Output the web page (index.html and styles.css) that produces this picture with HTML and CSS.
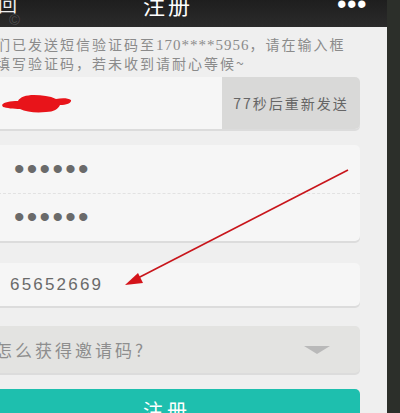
FILE: index.html
```html
<!DOCTYPE html>
<html lang="zh">
<head>
<meta charset="utf-8">
<link rel="stylesheet" href="styles.css">
</head>
<body>
<div class="screen">
  <header class="topbar">
    <span class="back">回</span>
    <span class="title">注册</span>
    <span class="more">•••</span>
    <span class="wm">©</span>
  </header>
  <div class="page">
    <p class="notice">我们已发送短信验证码至<span class="num">170****5956</span>，请在输入框<br>内填写验证码，若未收到请耐心等候~</p>
    <div class="box code">
      <div class="code-input">
        <svg class="scribble" width="74" height="24" viewBox="0 0 74 24"><path d="M2 14 C4 11 10 10 18 10 C20 6 26 4 34 4 C42 4 50 5 56 8 C62 7 68 7 71 9 C72 12 66 14 60 14 C58 18 54 21 46 21 C36 22 26 21 20 18 C14 18 6 17 3 16 Z" fill="#e8141a"/></svg>
      </div>
      <div class="resend">77秒后重新发送</div>
    </div>
    <div class="box pw">
      <div class="row"><span class="dots">••••••</span></div>
      <div class="row"><span class="dots">••••••</span></div>
    </div>
    <div class="box invite">65652669</div>
    <div class="box select">
      <span>怎么获得邀请码?</span>
      <span class="caret"></span>
    </div>
    <div class="submit">注册</div>
  </div>
  <svg class="arrow" width="400" height="413" viewBox="0 0 400 413">
    <line x1="348" y1="170" x2="136" y2="279" stroke="#c8151b" stroke-width="1.6"/>
    <polygon points="125,285 138,273 143,283" fill="#d4141a"/>
  </svg>
</div>
</body>
</html>
```
FILE: styles.css
```css
html, body {
  margin: 0;
  padding: 0;
}
body {
  width: 400px;
  height: 413px;
  overflow: hidden;
  background: #2c2f2a;
  font-family: "Noto Sans CJK SC", "Liberation Sans", sans-serif;
}
.screen {
  position: relative;
  width: 387px;
  height: 413px;
  background: #efefef;
  overflow: hidden;
}
.topbar {
  position: relative;
  height: 27px;
  background: linear-gradient(#1e1e1e, #2b2b2b);
  color: #fff;
}
.back {
  position: absolute;
  left: -2px;
  top: -6px;
  font-size: 19px;
  line-height: 20px;
  color: #eee;
}
.title {
  position: absolute;
  left: 143px;
  top: -8px;
  font-size: 22px;
  line-height: 24px;
  letter-spacing: 3px;
}
.more {
  position: absolute;
  left: 337px;
  top: -9px;
  font-family: "Liberation Sans", sans-serif;
  font-size: 27px;
  line-height: 26px;
  letter-spacing: 0.5px;
}
.wm {
  position: absolute;
  left: 9px;
  top: 11px;
  font-family: "Liberation Sans", sans-serif;
  font-size: 15px;
  color: rgba(255,255,255,0.18);
}
.page {
  margin-left: -12px;
  width: 372px;
  display: flex;
  flex-direction: column;
}
.notice {
  margin: 8px 0 0 -8px;
  font-size: 14px;
  line-height: 18px;
  letter-spacing: 2px;
  color: #8b8b8b;
  white-space: nowrap;
}
.notice .num {
  font-family: "Liberation Serif", serif;
  font-size: 15px;
  letter-spacing: 1px;
}
.box {
  background: #f6f6f6;
  border-radius: 5px;
  box-shadow: 0 2px 0 #dcdcdc;
}
.code {
  margin-top: 5px;
  height: 52px;
  display: flex;
}
.code-input {
  flex: 1;
  display: flex;
  align-items: center;
}
.scribble {
  margin-left: 12px;
}
.resend {
  width: 138px;
  background: #d9d9d8;
  border-radius: 0 5px 5px 0;
  display: flex;
  align-items: center;
  justify-content: center;
  font-size: 14px;
  letter-spacing: 2px;
  color: #666;
}
.pw {
  margin-top: 16px;
  height: 96px;
  display: flex;
  flex-direction: column;
}
.row {
  flex: 1;
  display: flex;
  align-items: center;
  padding-left: 26px;
}
.row + .row {
  border-top: 1px dashed #e2e2e2;
}
.dots {
  font-family: "Liberation Sans", sans-serif;
  font-size: 30px;
  line-height: 20px;
  letter-spacing: 2.3px;
  color: #6a6a6a;
}
.invite {
  margin-top: 22px;
  height: 43px;
  display: flex;
  align-items: center;
  padding-left: 22px;
  font-family: "Liberation Sans", sans-serif;
  font-size: 17px;
  letter-spacing: 2.2px;
  color: #6a6a6a;
}
.select {
  margin-top: 20px;
  height: 47px;
  background: #e3e3e1;
  display: flex;
  align-items: center;
  justify-content: space-between;
  padding-left: 7px;
  padding-right: 30px;
  font-size: 17px;
  letter-spacing: 3px;
  color: #8e8e8e;
}
.caret {
  width: 0;
  height: 0;
  border-left: 13px solid transparent;
  border-right: 13px solid transparent;
  border-top: 8px solid #b9b9b9;
}
.submit {
  margin-top: 16px;
  height: 50px;
  background: #1ebfae;
  border-radius: 5px;
  color: #fff;
  text-align: center;
  font-size: 20px;
  line-height: 26px;
  padding-top: 9px;
  padding-right: 14px;
  letter-spacing: 4px;
}
.arrow {
  position: absolute;
  left: 0;
  top: 0;
  pointer-events: none;
}
```
